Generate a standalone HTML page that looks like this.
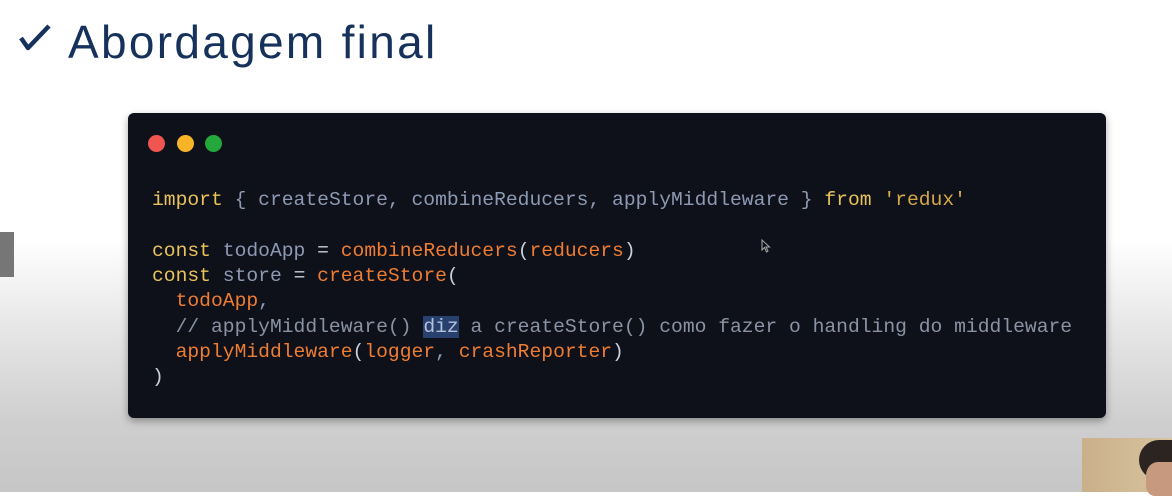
<!DOCTYPE html>
<html><head><meta charset="utf-8"><style>
html,body{margin:0;padding:0}
body{width:1172px;height:492px;overflow:hidden;position:relative;font-family:"Liberation Sans",sans-serif;
background:linear-gradient(to bottom,#fff 0px,#fff 240px,#e6e6e6 330px,#cfcfcf 420px,#c6c6c6 492px);}
.title{position:absolute;left:68px;top:14px;font-size:46px;color:#16325c;letter-spacing:2.3px;line-height:56px}
.chk{position:absolute;left:18px;top:22px}
.card{position:absolute;left:128px;top:113px;width:978px;height:305px;background:#0e1119;border-radius:6px;box-shadow:0 3px 8px rgba(0,0,0,.35)}
.dot{position:absolute;top:135px;width:17px;height:17px;border-radius:50%}
pre{position:absolute;left:152px;top:188px;margin:0;font-family:"Liberation Mono","DejaVu Sans Mono",monospace;font-size:19.67px;line-height:25.33px;color:#8d9ab3}
.k{color:#e8c35a}.o{color:#ee7d33}.w{color:#c9cfdb}.s{color:#d6a94c}.c{color:#8a93a5}
.hl{background:#27406e;color:#b6c2da}
</style></head><body>
<svg class="chk" width="34" height="30" viewBox="0 0 34 30"><path d="M3 16 L10 26 L31 4" fill="none" stroke="#16325c" stroke-width="4.5" stroke-linejoin="round"/></svg>
<div class="title">Abordagem final</div>
<div style="position:absolute;left:0;top:232px;width:14px;height:45px;background:#767676"></div>
<div class="card"></div>
<div class="dot" style="left:148px;background:#f0564f"></div>
<div class="dot" style="left:177px;background:#f8b427"></div>
<div class="dot" style="left:205px;background:#25a83b"></div>
<pre><span class="k">import</span> { createStore, combineReducers, applyMiddleware } <span class="k">from</span> <span class="s">'redux'</span>

<span class="k">const</span> todoApp <span class="w">=</span> <span class="o">combineReducers</span><span class="w">(</span><span class="o">reducers</span><span class="w">)</span>
<span class="k">const</span> store <span class="w">=</span> <span class="o">createStore</span><span class="w">(</span>
  <span class="o">todoApp</span>,
  <span class="c">// applyMiddleware() <span class="hl">diz</span> a createStore() como fazer o handling do middleware</span>
  <span class="o">applyMiddleware</span><span class="w">(</span><span class="o">logger</span>, <span class="o">crashReporter</span><span class="w">)</span>
<span class="w">)</span></pre>
<svg style="position:absolute;left:761px;top:239px" width="10" height="14" viewBox="0 0 10 14"><path d="M1 1 L1 11 L3.5 8.5 L5.5 13 L7 12 L5 8 L8.5 8 Z" fill="#0e1119" stroke="#aaa" stroke-width="1"/></svg>
<div style="position:absolute;left:1082px;top:438px;width:90px;height:54px;background:linear-gradient(to right,#c9b08a,#d8c3a0)"></div>
<div style="position:absolute;left:1139px;top:440px;width:40px;height:40px;border-radius:50% 0 0 50%;background:#2b2420"></div>
<div style="position:absolute;left:1146px;top:462px;width:30px;height:34px;border-radius:40% 0 0 30%;background:#c79a80"></div>
</body></html>
